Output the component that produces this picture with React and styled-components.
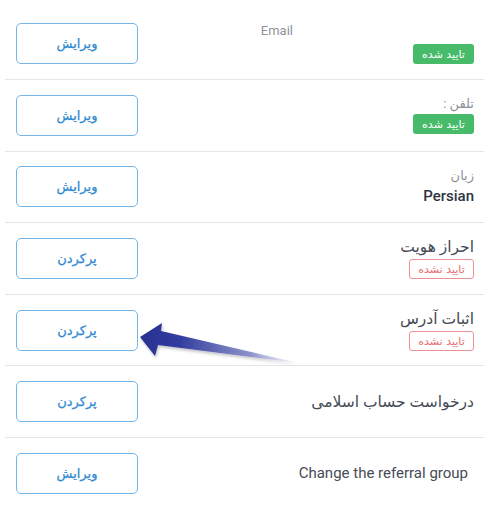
import React from "react";
import styled, { createGlobalStyle } from "styled-components";

const Global = createGlobalStyle`
  html, body { margin: 0; padding: 0; background: #ffffff; }
  body { font-family: Roboto, "DejaVu Sans", sans-serif; }
`;

const Page = styled.div`
  position: relative;
  width: 500px;
  height: 512px;
  overflow: hidden;
  padding-top: 8.4px;
  box-sizing: border-box;
`;

const List = styled.div`
  margin-left: 5px;
  width: 479px;
`;

const Row = styled.div`
  display: flex;
  align-items: center;
  justify-content: space-between;
  height: 70.6px;
  padding: 0 ${(p) => p.$pr || 10}px 0 11px;
  border-bottom: ${(p) => (p.$last ? "none" : "1px solid #e6e6e6")};
`;

const ActionButton = styled.button`
  width: 122px;
  height: 41px;
  box-sizing: border-box;
  border: 1.5px solid #72b6ea;
  border-radius: 5px;
  background: #fff;
  color: #2f8ad2;
  font-family: "DejaVu Sans", sans-serif;
  font-size: 13px;
  font-weight: 400;
  -webkit-text-stroke: 0.25px #2f8ad2;
  direction: rtl;
  cursor: pointer;
  padding: 0;
`;

const Info = styled.div`
  display: flex;
  flex-direction: column;
  align-items: flex-start;
  direction: rtl;
  text-align: right;
`;

const Label = styled.div`
  font-family: Roboto, "DejaVu Sans", sans-serif;
  font-size: 13px;
  line-height: 16px;
  color: #8d929b;
  margin-bottom: ${(p) => p.$gap || 1}px;
`;

const Spacer = styled.span`
  display: inline-block;
  width: ${(p) => p.$w}px;
`;

const Value = styled.div`
  font-family: Roboto, "DejaVu Sans", sans-serif;
  font-size: 15px;
  line-height: 20px;
  color: #2e3442;
  font-weight: 500;
`;

const Title = styled.div`
  font-family: Roboto, "DejaVu Sans", sans-serif;
  font-size: ${(p) => p.$size || 15.5}px;
  line-height: 20px;
  color: #464b56;
  direction: ${(p) => (p.$ltr ? "ltr" : "rtl")};
  margin-bottom: ${(p) => p.$gap || 0}px;
`;

const Badge = styled.span`
  display: inline-flex;
  align-items: center;
  justify-content: center;
  height: 20px;
  min-width: ${(p) => (p.$ok ? 61 : 65)}px;
  box-sizing: border-box;
  padding: 0 6px;
  border-radius: 3px;
  font-family: "DejaVu Sans", sans-serif;
  font-size: 11px;
  font-weight: 400;
  background: ${(p) => (p.$ok ? "#48bb6b" : "#ffffff")};
  color: ${(p) => (p.$ok ? "#ffffff" : "#ec6a6e")};
  border: ${(p) => (p.$ok ? "none" : "1px solid #f09096")};
`;

const ArrowLayer = styled.svg`
  position: absolute;
  left: 0;
  top: 0;
  pointer-events: none;
`;

const rows = [
  {
    btn: "ویرایش",
    info: (
      <Info>
        <Label $gap={5}>
          <Spacer $w={181} />
          Email
        </Label>
        <Badge $ok>تایید شده</Badge>
      </Info>
    ),
  },
  {
    btn: "ویرایش",
    info: (
      <Info>
        <Label $gap={2}>تلفن :</Label>
        <Badge $ok>تایید شده</Badge>
      </Info>
    ),
  },
  {
    btn: "ویرایش",
    info: (
      <Info>
        <Label $gap={2}>زبان</Label>
        <Value>Persian</Value>
      </Info>
    ),
  },
  {
    btn: "پرکردن",
    info: (
      <Info>
        <Title $gap={2}>احراز هویت</Title>
        <Badge>تایید نشده</Badge>
      </Info>
    ),
  },
  {
    btn: "پرکردن",
    info: (
      <Info>
        <Title $gap={2}>اثبات آدرس</Title>
        <Badge>تایید نشده</Badge>
      </Info>
    ),
  },
  {
    btn: "پرکردن",
    info: (
      <Info>
        <Title>درخواست حساب اسلامی</Title>
      </Info>
    ),
  },
  {
    btn: "ویرایش",
    pr: 16,
    info: (
      <Info>
        <Title $size={15} $ltr>
          Change the referral group
        </Title>
      </Info>
    ),
  },
];

export default function App() {
  return (
    <>
      <Global />
      <Page>
        <List>
          {rows.map((r, i) => (
            <Row key={i} $last={i === rows.length - 1} $pr={r.pr}>
              <ActionButton>{r.btn}</ActionButton>
              {r.info}
            </Row>
          ))}
        </List>
        <ArrowLayer width="500" height="512" viewBox="0 0 500 512">
          <defs>
            <linearGradient id="ag" x1="140" y1="337" x2="298" y2="363" gradientUnits="userSpaceOnUse">
              <stop offset="0" stopColor="#28318f" />
              <stop offset="0.25" stopColor="#323ca0" />
              <stop offset="0.7" stopColor="#7d84c4" stopOpacity="0.85" />
              <stop offset="1" stopColor="#e4e6f4" stopOpacity="0.4" />
            </linearGradient>
            <filter id="sh" x="-10%" y="-30%" width="130%" height="170%">
              <feDropShadow dx="1" dy="2" stdDeviation="1.5" floodColor="#000" floodOpacity="0.25" />
            </filter>
          </defs>
          <path
            d="M140 337 L162 323 L161 331 L298 363 L158 345 L155 356 Z"
            fill="url(#ag)"
            filter="url(#sh)"
          />
        </ArrowLayer>
      </Page>
    </>
  );
}
